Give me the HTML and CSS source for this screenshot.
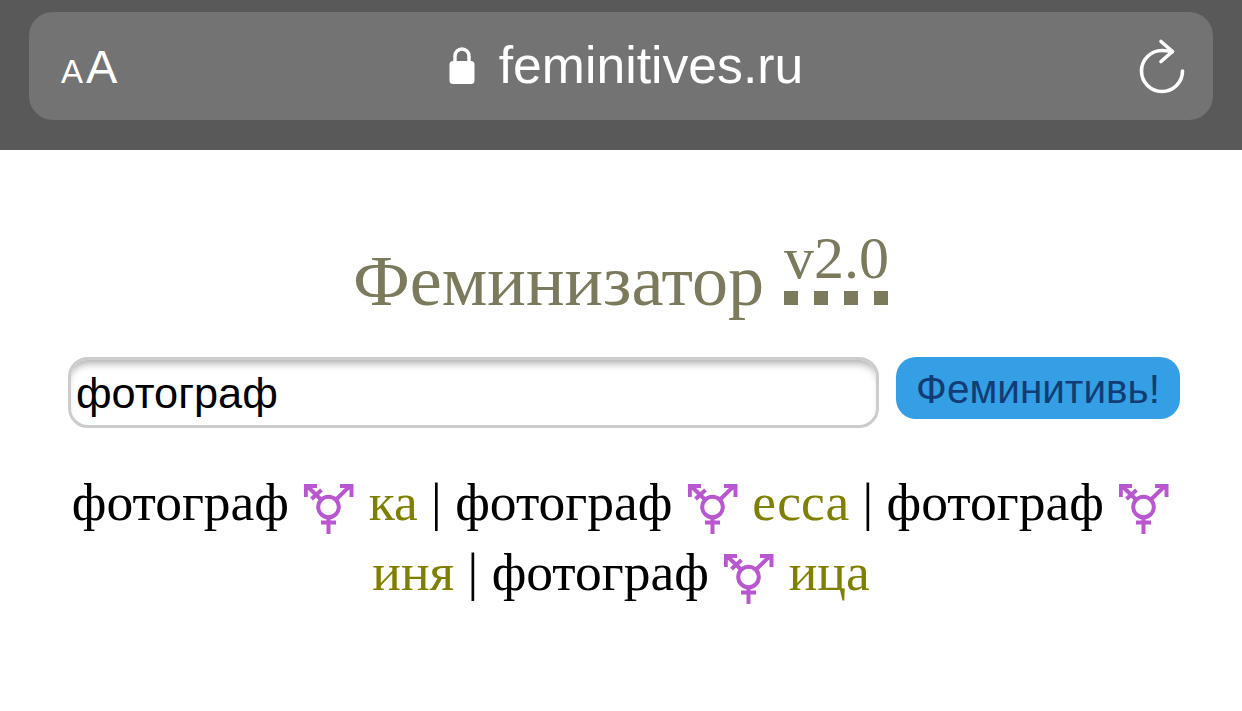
FILE: index.html
```html
<!DOCTYPE html>
<html lang="ru">
<head>
<meta charset="utf-8">
<title>Феминизатор</title>
<link rel="stylesheet" href="styles.css">
</head>
<body>
<header class="chrome">
  <div class="bar">
    <div class="aa"><span class="aa-small">A</span><span class="aa-big">A</span></div>
    <div class="address">
      <svg class="lock" viewBox="0 0 26 38" width="26" height="38"><path d="M6 17V10a7 7 0 0 1 14 0v7" fill="none" stroke="#fff" stroke-width="3.4"/><rect x="0.5" y="15" width="25" height="23" rx="3.5" fill="#fff"/></svg>
      <span class="url">feminitives.ru</span>
    </div>
    <svg class="reload" viewBox="0 0 46 56" width="46" height="56"><path d="M33 14C30 13 26.500 12.500 23 12.500A20.500 20.500 0 1 0 43.500 33" fill="none" stroke="#fff" stroke-width="3.600" stroke-linecap="round"/><path d="M22 3.500L33.500 13.500L22 23.500" fill="none" stroke="#fff" stroke-width="3.600" stroke-linecap="round" stroke-linejoin="round"/></svg>
  </div>
</header>
<main class="page">
  <h1 class="title">Феминизатор <sup class="version">v2.0</sup></h1>
  <form class="search">
    <input class="field" type="text" value="фотограф">
    <button class="go" type="button">Феминитивь!</button>
  </form>
  <p class="result">фотограф <svg class="sym" viewBox="0 0 50 50"><use href="#trans"/></svg> <span class="end">ка</span> | фотограф <svg class="sym" viewBox="0 0 50 50"><use href="#trans"/></svg> <span class="end">есса</span> | фотограф <svg class="sym" viewBox="0 0 50 50"><use href="#trans"/></svg> <span class="end">иня</span> | фотограф <svg class="sym" viewBox="0 0 50 50"><use href="#trans"/></svg> <span class="end">ица</span></p>
</main>
<svg class="defs" width="0" height="0">
  <symbol id="trans" viewBox="0 0 50 50">
    <g fill="none" stroke="#b957d0" stroke-width="4">
      <circle cx="24.500" cy="23" r="10.300"/>
      <path d="M24.500 33.300V50M17 38.500H32M32 15.500L46 2M36 2H47.500V13M17 15.500L3 2M13 2H1.800V13M7.500 15L17.500 6"/>
    </g>
  </symbol>
</svg>
</body>
</html>
```
FILE: styles.css
```css
* { box-sizing: border-box; }
html, body { margin: 0; padding: 0; background: #fff; }
body { font-family: "Liberation Serif", serif; overflow: hidden; height: 711px; }

.chrome { height: 150px; background: #595959; padding: 12px 29px 30px; }
.bar {
  height: 108px; background: #737373; border-radius: 24px;
  display: grid; grid-template-columns: 1fr auto 1fr; align-items: center;
  padding: 0 28px 0 32px; color: #fff; font-family: "Liberation Sans", sans-serif;
}
.aa { display: flex; align-items: baseline; gap: 3px; line-height: 1; }
.aa-small { font-size: 33px; }
.aa-big { font-size: 47px; }
.address { display: flex; align-items: center; gap: 24px; margin-left: 6px; }
.lock { display: block; margin-top: -2px; }
.url { font-size: 51.700px; line-height: 1; margin-top: 0; }
.reload { justify-self: end; }

.page { padding: 0 62px; text-align: center; }
.title {
  margin: 0; padding-top: 80px; font-weight: 400; font-size: 72px; line-height: 100px;
  height: 178px; color: #7b7a5c; white-space: nowrap;
}
.version {
  display: inline-block; font-size: 60px; line-height: 56px; margin-left: 2px;
  vertical-align: 27px; padding-bottom: 19px;
  background: repeating-linear-gradient(90deg, #7b7a5c 0 14px, transparent 14px 30px) left bottom / 100% 14px no-repeat;
}
.search { display: flex; justify-content: space-between; align-items: flex-start; margin: 29px 0 0 6px; width: 1112px; }
.field {
  width: 811px; height: 71px; padding: 1px 5px 0; border: 3px solid #cccccc; border-radius: 20px;
  font: 43.300px "Liberation Sans", sans-serif; color: #000; background: #fff; outline: 0;
  box-shadow: inset 0 8px 8px -5px #a8a8a8;
}
.go {
  width: 284px; height: 62px; border: 0; border-radius: 20px; background: #349fe4;
  color: #123c74; font: 40.500px "Liberation Sans", sans-serif; padding: 2px 0 0;
}
.result { margin: 39px -10px 0; font-size: 53.500px; line-height: 70px; color: #000; }
.end { color: #808000; }
.sym { width: 50px; height: 50px; margin: 0 1px 0 2px; vertical-align: -14px; }
.defs { position: absolute; }
```
